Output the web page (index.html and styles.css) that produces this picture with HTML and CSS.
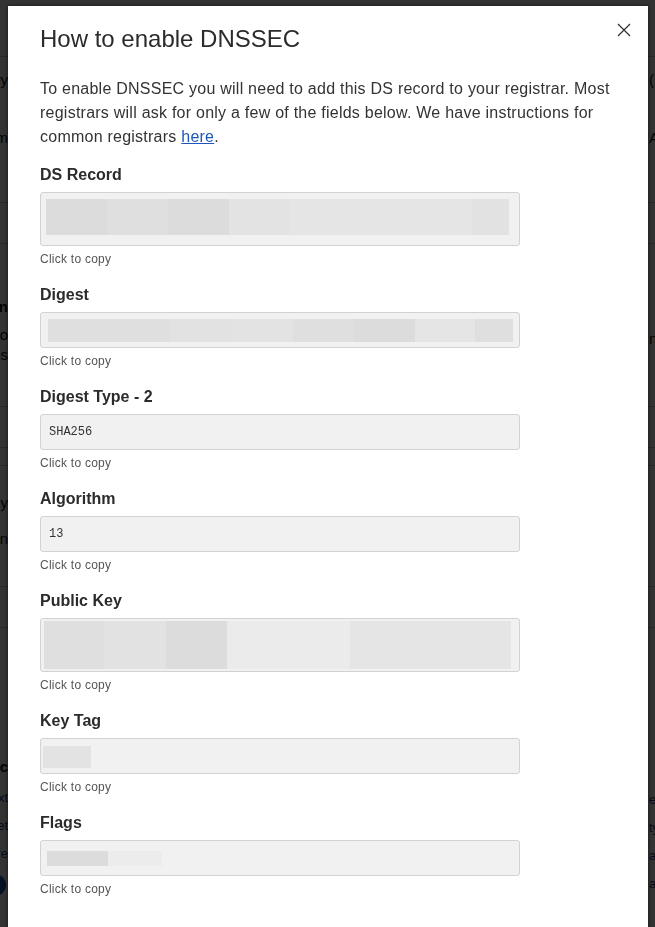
FILE: index.html
```html
<!DOCTYPE html>
<html>

<head>
  <title>DNSSEC</title>
  <meta name="viewport" content="width=device-width, initial-scale=1.0">
  <link rel="stylesheet" href="styles.css">
</head>

<body>
  <!-- page behind the dialog -->
  <div class="page">
    <div class="row h57"></div>
    <div class="row h146">
      <div class="edge"><span class="mt14">Summary</span><span class="mt40">Confirm</span></div>
      <div></div>
      <div class="edge-r"><span class="mt14">(DS)</span><span class="mt40">Advanced</span></div>
    </div>
    <div class="row h41"></div>
    <div class="row h163">
      <div class="edge"><span class="mt54 strong">DNSSEC on</span><span class="mt10">Disco</span><span class="mt2">Records</span></div>
      <div></div>
      <div class="edge-r"><span class="mt86">nameserver</span></div>
    </div>
    <div class="row h41"></div>
    <div class="row h18"></div>
    <div class="row h121">
      <div class="edge"><span class="mt28">Key</span><span class="mt18">Domain</span></div>
      <div></div>
      <div></div>
    </div>
    <div class="row h41"></div>
    <div class="row last">
      <div class="edge"><span class="mt130 strong">Sync</span><span class="mt12 link">Text</span><span class="mt8 link">Set</span><span class="mt8 link">More</span><span class="dot"></span></div>
      <div></div>
      <div class="edge-r"><span class="mt162 link">edit</span><span class="mt8 link">type</span><span class="mt8 link">action</span><span class="mt8 link">after</span></div>
    </div>
  </div>
  <div class="backdrop"></div>

  <div class="modal">
    <button class="close" aria-label="Close">
      <svg width="14" height="14" viewBox="0 0 14 14">
        <path d="M1 1 L13 13 M13 1 L1 13" stroke="#333" stroke-width="1.3" fill="none" />
      </svg>
    </button>
    <h2 class="modal-title">How to enable DNSSEC</h2>
    <p class="intro">To enable DNSSEC you will need to add this DS record to your registrar. Most registrars will ask for only a few of the fields below. We have instructions for common registrars <a href="#">here</a>.</p>

    <div class="field">
      <div class="field-label">DS Record</div>
      <div class="field-value ds">
        <div class="redact h36">
          <span class="w61 g1"></span><span class="w61 g2"></span><span class="w61 g1"></span><span class="w61 g4"></span><span class="w182 g5"></span><span class="w37 g3"></span>
        </div>
      </div>
      <div class="field-hint">Click to copy</div>
    </div>

    <div class="field">
      <div class="field-label">Digest</div>
      <div class="field-value digest">
        <div class="redact h23">
          <span class="w122 g2"></span><span class="w62 g3"></span><span class="w61 g4"></span><span class="w61 g2"></span><span class="w61 g1"></span><span class="w60 g5"></span><span class="w38 g2"></span>
        </div>
      </div>
      <div class="field-hint">Click to copy</div>
    </div>

    <div class="field">
      <div class="field-label">Digest Type - 2</div>
      <div class="field-value mono">SHA256</div>
      <div class="field-hint">Click to copy</div>
    </div>

    <div class="field">
      <div class="field-label">Algorithm</div>
      <div class="field-value mono">13</div>
      <div class="field-hint">Click to copy</div>
    </div>

    <div class="field">
      <div class="field-label">Public Key</div>
      <div class="field-value pubkey">
        <div class="redact h48">
          <span class="w60 g2"></span><span class="w62 g3"></span><span class="w61 g1"></span><span class="w123 g6"></span><span class="w161 g5"></span>
        </div>
      </div>
      <div class="field-hint">Click to copy</div>
    </div>

    <div class="field">
      <div class="field-label">Key Tag</div>
      <div class="field-value keytag">
        <div class="redact h22">
          <span class="w48 g4"></span>
        </div>
      </div>
      <div class="field-hint">Click to copy</div>
    </div>

    <div class="field">
      <div class="field-label">Flags</div>
      <div class="field-value flags">
        <div class="redact h15">
          <span class="w61 g1"></span><span class="w54 g7"></span>
        </div>
      </div>
      <div class="field-hint">Click to copy</div>
    </div>
  </div>
</body>
</html>
```

FILE: styles.css
```css
/* variables */
:root {
  --text: #333;
  --hint: #555;
  --box-bg: #f1f1f1;
  --box-border: #d2d2d2;
  --link: #1f57b8;
}

* {
  box-sizing: border-box;
}

body,
html {
  margin: 0;
  padding: 0;
  overflow: hidden;
  background: #fff;
  font-family: 'Liberation Sans', Arial, sans-serif;
  color: var(--text);
}

/* page behind */
.page {
  width: 100vw;
  height: 100vh;
  display: flex;
  flex-direction: column;
  font-size: 15px;
  color: #111;
}

.row {
  display: grid;
  grid-template-columns: 8px 640px 1fr;
  border-bottom: 1px solid #c6c6c6;
  overflow: hidden;
  flex-shrink: 0;
}

.row.last {
  border-bottom: 0;
  flex: 1;
}

.h57 { height: 57px; }
.h146 { height: 146px; }
.h41 { height: 41px; }
.h163 { height: 163px; }
.h18 { height: 18px; }
.h121 { height: 121px; }

.edge,
.edge-r {
  display: flex;
  flex-direction: column;
  white-space: nowrap;
  line-height: 18px;
}

.edge {
  align-items: flex-end;
}

.edge-r {
  align-items: flex-start;
  padding-left: 1px;
}

.strong { font-weight: bold; }
.link { color: #1c3d7a; font-size: 13px; line-height: 20px; }

.mt2 { margin-top: 2px; }
.mt8 { margin-top: 8px; }
.mt10 { margin-top: 10px; }
.mt12 { margin-top: 12px; }
.mt14 { margin-top: 14px; }
.mt18 { margin-top: 18px; }
.mt28 { margin-top: 28px; }
.mt40 { margin-top: 40px; }
.mt54 { margin-top: 54px; }
.mt86 { margin-top: 86px; }
.mt130 { margin-top: 130px; }
.mt162 { margin-top: 162px; }

.dot {
  width: 22px;
  height: 22px;
  border-radius: 50%;
  background: #1b4fa8;
  margin-top: 10px;
  margin-right: 2px;
}

.backdrop {
  position: fixed;
  inset: 0;
  background: rgba(0, 0, 0, 0.8);
}

/* dialog */
.modal {
  position: fixed;
  top: 6px;
  left: 8px;
  width: 640px;
  bottom: -40px;
  padding: 17px 32px 0;
  background: #fff;
  box-shadow: 0 0 4px rgba(0, 0, 0, 0.6);
}

.close {
  position: absolute;
  top: 17px;
  right: 17px;
  width: 14px;
  height: 14px;
  padding: 0;
  border: 0;
  background: none;
  cursor: pointer;
}

.close svg {
  display: block;
}

.modal-title {
  margin: 0;
  font-size: 24px;
  line-height: 32px;
  font-weight: normal;
  color: #2b2b2b;
}

.intro {
  margin: 22px 0 14px;
  font-size: 16px;
  line-height: 24px;
  letter-spacing: 0.24px;
}

.intro a {
  color: var(--link);
  text-decoration: underline;
}

/* fields */
.field {
  margin-bottom: 15px;
}

.field-label {
  font-size: 16px;
  line-height: 24px;
  font-weight: bold;
  margin-bottom: 5px;
  color: #2b2b2b;
}

.field-value {
  width: 480px;
  height: 36px;
  background: var(--box-bg);
  border: 1px solid var(--box-border);
  border-radius: 3px;
  cursor: pointer;
}

.field-value.mono {
  padding: 0 8px;
  font-family: 'Liberation Mono', 'Courier New', monospace;
  font-size: 12px;
  line-height: 34px;
  color: #333;
}

.field-value.ds {
  height: 54px;
  padding: 6px 0 0 5px;
}

.field-value.digest {
  padding: 6px 0 0 7px;
}

.field-value.pubkey {
  height: 54px;
  padding: 2px 0 0 3px;
}

.field-value.keytag {
  padding: 7px 0 0 2px;
}

.field-value.flags {
  padding: 10px 0 0 6px;
}

.field-hint {
  margin-top: 4px;
  font-size: 12px;
  line-height: 18px;
  letter-spacing: 0.25px;
  color: var(--hint);
}

/* redacted values */
.redact {
  display: flex;
}

.redact span {
  flex-shrink: 0;
}

.h15 { height: 15px; }
.h22 { height: 22px; }
.h23 { height: 23px; }
.h36 { height: 36px; }
.h48 { height: 48px; }

.w37 { width: 37px; }
.w38 { width: 38px; }
.w48 { width: 48px; }
.w54 { width: 54px; }
.w60 { width: 60px; }
.w61 { width: 61px; }
.w62 { width: 62px; }
.w122 { width: 122px; }
.w123 { width: 123px; }
.w161 { width: 161px; }
.w182 { width: 182px; }

.g1 { background: #dcdcdc; }
.g2 { background: #dfdfdf; }
.g3 { background: #e2e2e2; }
.g4 { background: #e3e3e3; }
.g5 { background: #e5e5e5; }
.g6 { background: #ebebeb; }
.g7 { background: #ececec; }
```
